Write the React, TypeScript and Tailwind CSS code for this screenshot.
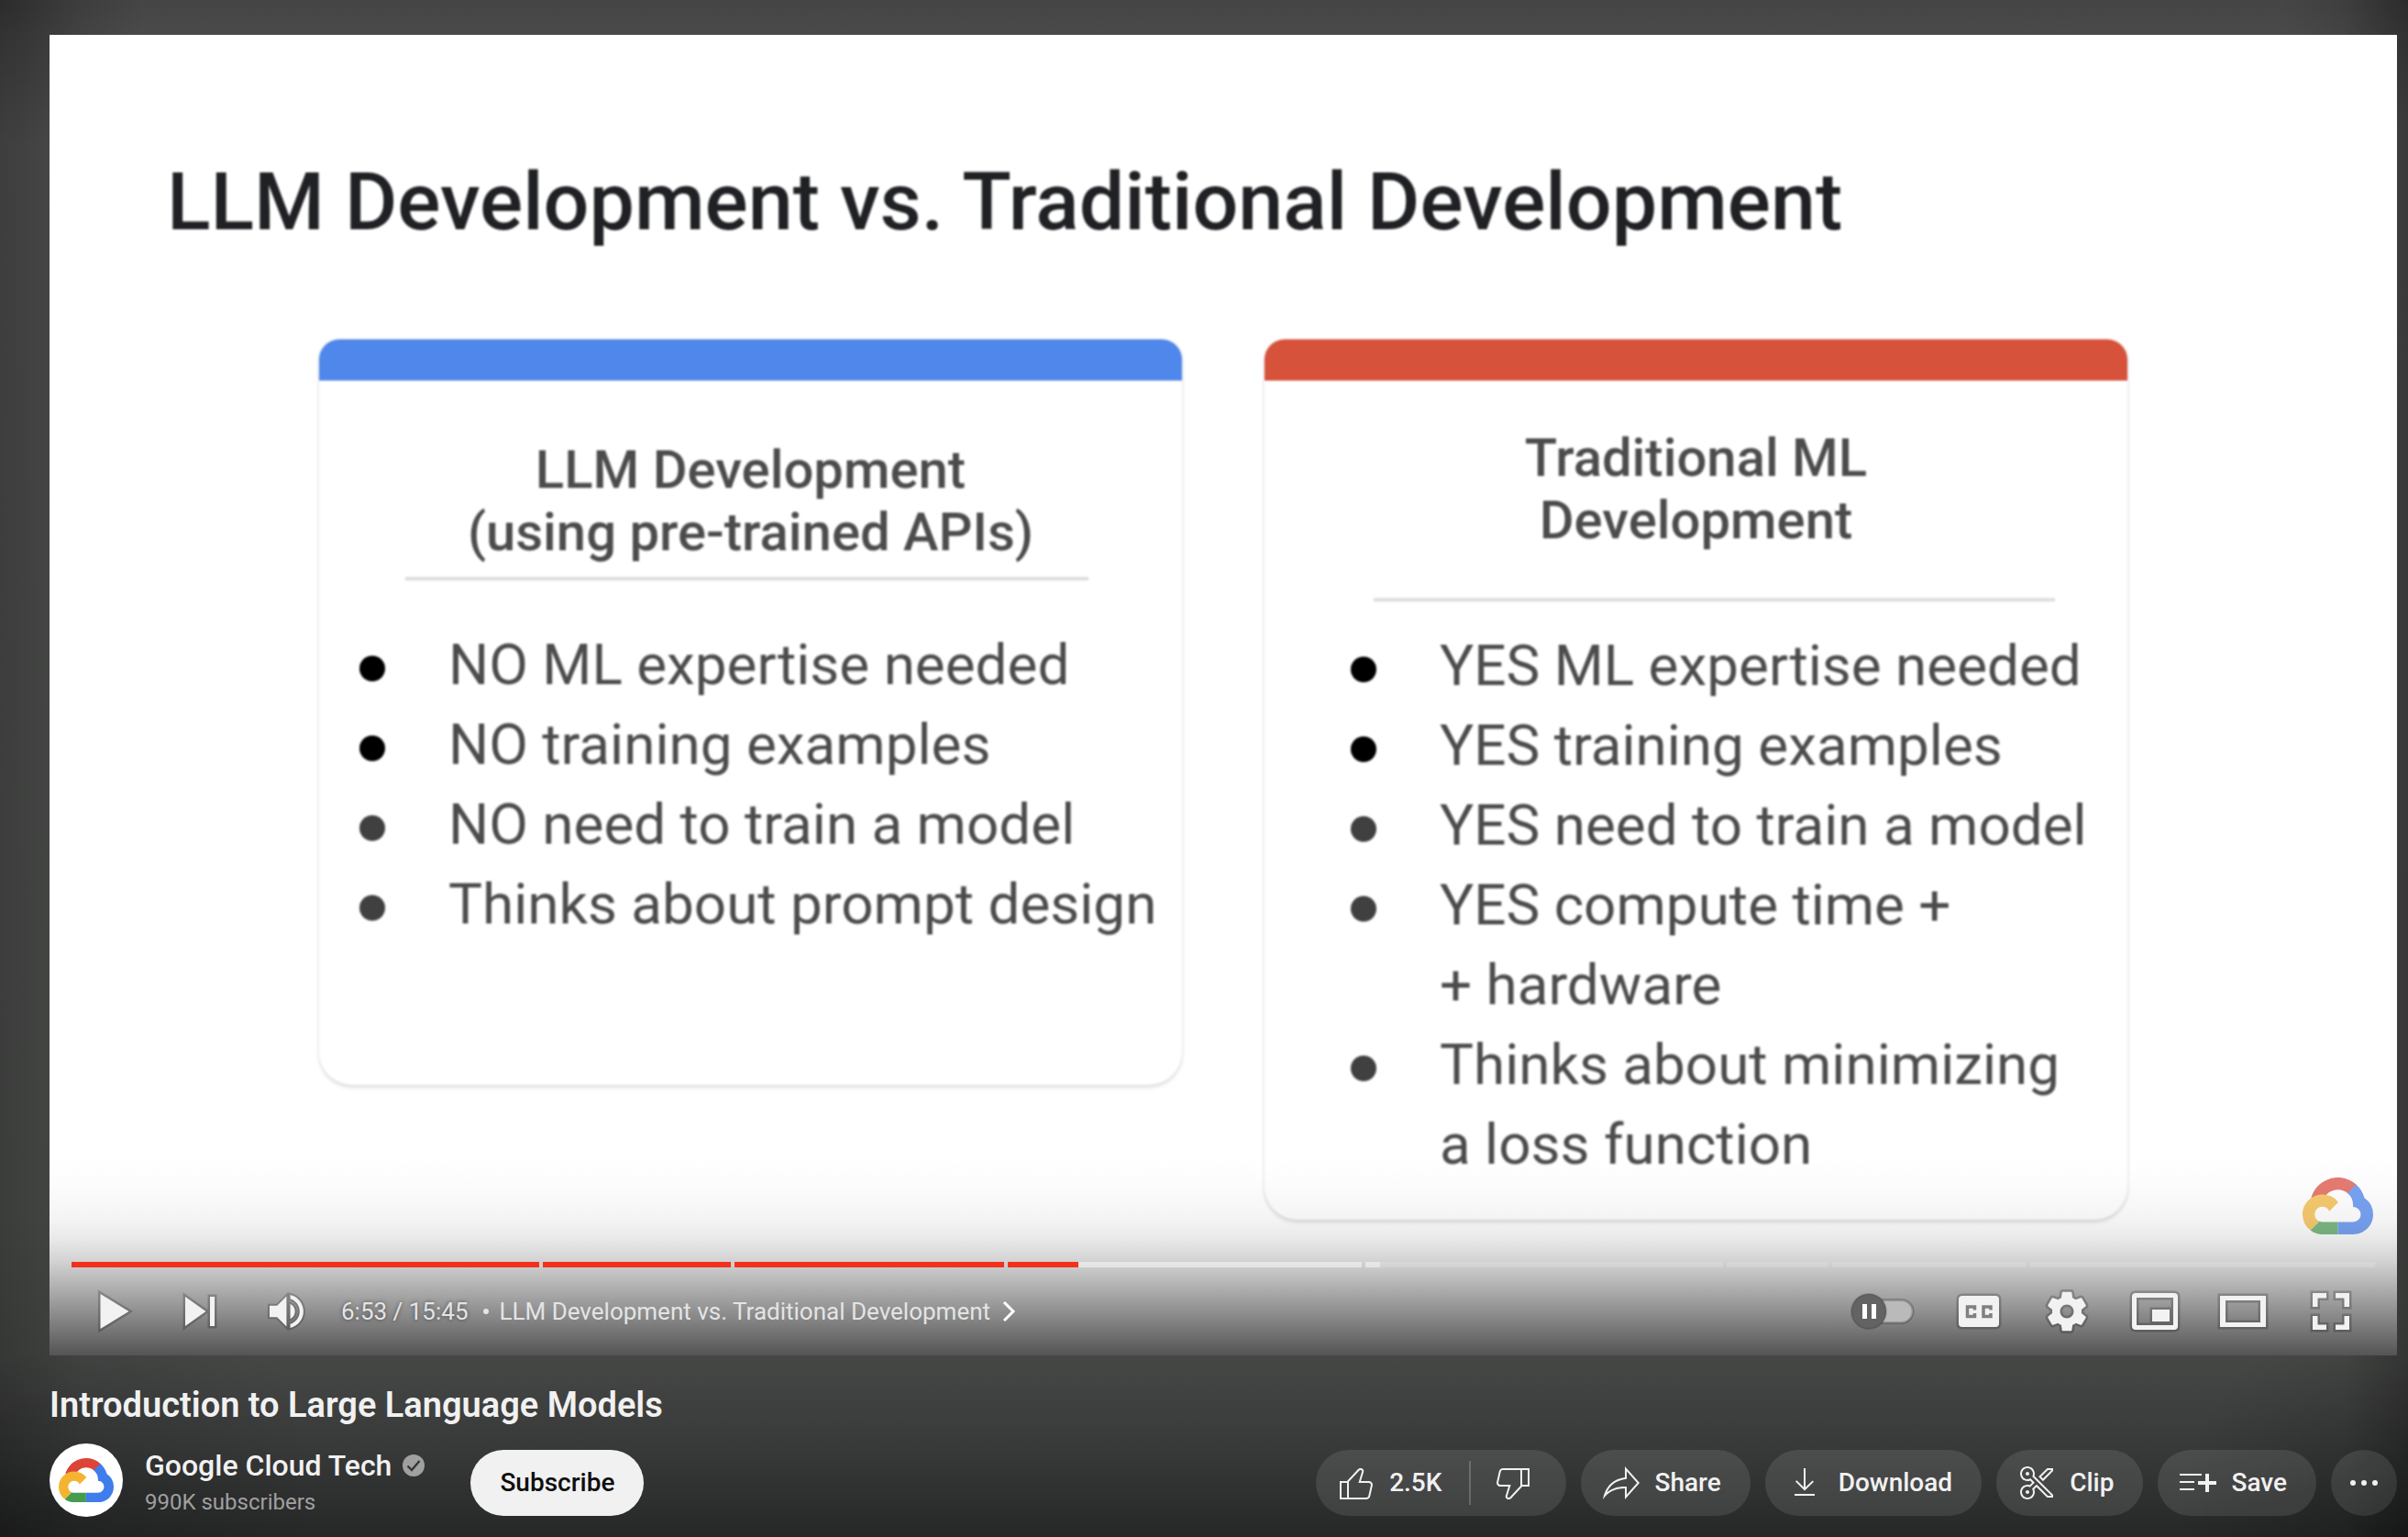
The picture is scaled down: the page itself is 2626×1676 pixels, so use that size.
import type { ReactNode } from "react";

const chapters = [
  { size: 510, played: 100, loaded: 100 },
  { size: 204, played: 100, loaded: 100 },
  { size: 294, played: 100, loaded: 100 },
  { size: 386, played: 20, loaded: 100 },
  { size: 390, played: 0, loaded: 4 },
  { size: 110, played: 0, loaded: 0 },
  { size: 212, played: 0, loaded: 0 },
  { size: 376, played: 0, loaded: 0 },
];

function CloudLogo({ className }: { className: string }) {
  return (
    <svg viewBox="0 0 256 206" className={className} aria-hidden="true">
      <path
        fill="#DB4437"
        d="M170.252 56.819l22.253-22.253 1.483-9.37C153.437-11.677 88.976-7.496 52.42 33.92 42.267 45.423 34.734 59.764 30.717 74.573l7.97-1.123 44.505-7.34 3.436-3.513c19.797-21.742 53.27-24.667 76.128-6.168l7.496.39z"
      />
      <path
        fill="#3F7DED"
        d="M224.205 73.918a100.249 100.249 0 0 0-30.217-48.722l-31.232 31.232a55.515 55.515 0 0 1 20.379 44.037v5.544c15.35 0 27.797 12.445 27.797 27.796 0 15.352-12.446 27.485-27.797 27.485h-55.671v44.505h55.67c39.93.311 72.553-31.494 72.864-71.424a72.303 72.303 0 0 0-31.793-60.453"
      />
      <path
        fill="#459C50"
        d="M71.87 205.796h55.593V161.29H71.87a27.275 27.275 0 0 1-11.4-2.498L28.222 191.04c12.567 9.489 27.9 14.825 43.647 14.757"
      />
      <path
        fill="#F4B432"
        d="M71.87 61.425C31.94 61.663-.237 94.228.001 134.158a72.301 72.301 0 0 0 28.222 56.88l32.248-32.246c-13.99-6.322-20.208-22.786-13.887-36.776 6.322-13.99 22.786-20.208 36.775-13.888a27.796 27.796 0 0 1 13.887 13.888l32.248-32.248A72.224 72.224 0 0 0 71.87 61.425"
      />
    </svg>
  );
}

type CardProps = {
  title: [string, string];
  bar: string;
  head: string;
  rule: string;
  list: string;
  items: { dot: string; lines: string[] }[];
};

function SlideCard({ title, bar, head, rule, list, items }: CardProps) {
  return (
    <section className="overflow-hidden rounded-t-[22px] rounded-b-[36px] bg-white text-[#4c4c4c] shadow-[0_3px_4px_rgba(0,0,0,0.12),0_0_4px_rgba(0,0,0,0.06)]">
      <div className={`h-[45px] ${bar}`} />
      <h3 className={`text-center text-[58px] leading-[68px] font-medium ${head}`}>
        {title[0]}
        <br />
        {title[1]}
      </h3>
      <div className={`h-1 bg-[#dedede] ${rule}`} />
      <ul className={`text-[62px] leading-[87px] ${list}`}>
        {items.map((item) => (
          <li key={item.lines[0]} className="flex gap-[69px]">
            <span className={`mt-[34px] size-7 shrink-0 rounded-full ${item.dot}`} />
            <span className="whitespace-nowrap">
              {item.lines.map((line) => (
                <span key={line} className="block">
                  {line}
                </span>
              ))}
            </span>
          </li>
        ))}
      </ul>
    </section>
  );
}

function Slide() {
  return (
    <div className="h-full bg-white pt-[130px] blur-[1px]">
      <h2 className="pl-[128px] text-[88px] leading-[104px] font-medium text-[#202124]">
        LLM Development vs. Traditional Development
      </h2>
      <div className="mt-[98px] grid grid-cols-2 items-start gap-[90px] px-[294px]">
        <SlideCard
          title={["LLM Development", "(using pre-trained APIs)"]}
          bar="bg-[#5087ea]"
          head="mt-[63px]"
          rule="mt-[15px] mr-[102px] ml-[94px]"
          list="mt-[48px] pb-[154px] pl-11"
          items={[
            { dot: "bg-black", lines: ["NO ML expertise needed"] },
            { dot: "bg-black", lines: ["NO training examples"] },
            { dot: "bg-[#404040]", lines: ["NO need to train a model"] },
            { dot: "bg-[#404040]", lines: ["Thinks about prompt design"] },
          ]}
        />
        <SlideCard
          title={["Traditional ML", "Development"]}
          bar="bg-[#d7523b]"
          head="mt-[50px]"
          rule="mt-[51px] mr-[79px] ml-[119px]"
          list="mt-[26px] pb-[39px] pl-[94px]"
          items={[
            { dot: "bg-black", lines: ["YES ML expertise needed"] },
            { dot: "bg-black", lines: ["YES training examples"] },
            { dot: "bg-[#404040]", lines: ["YES need to train a model"] },
            { dot: "bg-[#404040]", lines: ["YES compute time +", "+ hardware"] },
            { dot: "bg-[#404040]", lines: ["Thinks about minimizing", "a loss function"] },
          ]}
        />
      </div>
    </div>
  );
}

function Glyph({ d, transform }: { d: string; transform?: string }) {
  return (
    <g transform={transform} fillRule="evenodd">
      <path d={d} fill="none" stroke="#000" strokeOpacity="0.2" strokeWidth={transform ? 2 : 5} />
      <path d={d} fill="#f2f2f2" />
    </g>
  );
}

function PlayerButton({ label, box, className, children }: { label: string; box: string; className: string; children: ReactNode }) {
  return (
    <button type="button" aria-label={label} className={`h-24 shrink-0 ${className}`}>
      <svg viewBox={box} className="size-full" aria-hidden="true">
        {children}
      </svg>
    </button>
  );
}

const VOLUME =
  "M8,21 L12,21 L17,26 L17,10 L12,15 L8,15 Z M19,14 L19,22 C20.48,21.32 21.5,19.77 21.5,18 C21.5,16.26 20.48,14.74 19,14 Z M19,11.29 C21.89,12.15 24,14.83 24,18 C24,21.17 21.89,23.85 19,24.71 L19,26.77 C23.01,25.86 26,22.28 26,18 C26,13.72 23.01,10.14 19,9.23 Z";
const GEAR =
  "m 23.94,18.78 c .03,-0.25 .05,-0.51 .05,-0.78 0,-0.27 -0.02,-0.52 -0.05,-0.78 l 1.68,-1.32 c .15,-0.12 .19,-0.33 .09,-0.51 l -1.6,-2.76 c -0.09,-0.17 -0.31,-0.24 -0.48,-0.17 l -1.99,.8 c -0.41,-0.32 -0.86,-0.58 -1.35,-0.78 l -0.30,-2.12 c -0.02,-0.19 -0.19,-0.33 -0.39,-0.33 l -3.2,0 c -0.2,0 -0.36,.14 -0.39,.33 l -0.30,2.12 c -0.48,.2 -0.93,.47 -1.35,.78 l -1.99,-0.8 c -0.18,-0.07 -0.39,0 -0.48,.17 l -1.6,2.76 c -0.10,.17 -0.05,.39 .09,.51 l 1.68,1.32 c -0.03,.25 -0.05,.52 -0.05,.78 0,.26 .02,.52 .05,.78 l -1.68,1.32 c -0.15,.12 -0.19,.33 -0.09,.51 l 1.6,2.76 c .09,.17 .31,.24 .48,.17 l 1.99,-0.8 c .41,.32 .86,.58 1.35,.78 l .30,2.12 c .02,.19 .19,.33 .39,.33 l 3.2,0 c .2,0 .36,-0.14 .39,-0.33 l .30,-2.12 c .48,-0.2 .93,-0.47 1.35,-0.78 l 1.99,.8 c .18,.07 .39,0 .48,-0.17 l 1.6,-2.76 c .09,-0.17 .05,-0.39 -0.09,-0.51 l -1.68,-1.32 z m -5.94,2.01 c -1.54,0 -2.8,-1.25 -2.8,-2.8 0,-1.54 1.25,-2.8 2.8,-2.8 1.54,0 2.8,1.25 2.8,2.8 0,1.54 -1.25,2.8 -2.8,2.8 z";

function Player() {
  return (
    <div className="relative aspect-video w-full overflow-hidden bg-white">
      <Slide />
      <CloudLogo className="absolute right-[26px] bottom-[132px] w-[77px] opacity-70" />
      <div className="absolute inset-x-0 bottom-0 h-[216px] bg-[linear-gradient(to_bottom,rgba(0,0,0,0)_0%,rgba(0,0,0,0.01)_14%,rgba(0,0,0,0.045)_31%,rgba(0,0,0,0.085)_41%,rgba(0,0,0,0.18)_53%,rgba(0,0,0,0.295)_64%,rgba(0,0,0,0.44)_78%,rgba(0,0,0,0.67)_100%)]" />
      <div className="absolute inset-x-6 bottom-0">
        <div className="flex h-[6px] gap-1" role="progressbar" aria-label="Video progress" aria-valuenow={44}>
          {chapters.map((c, i) => (
            <div key={i} className="relative basis-0 bg-white/15" style={{ flexGrow: c.size }}>
              <div className="absolute inset-y-0 left-0 bg-white/40" style={{ width: `${c.loaded}%` }} />
              <div className="absolute inset-y-0 left-0 bg-[#f3301c]" style={{ width: `${c.played}%` }} />
            </div>
          ))}
        </div>
        <div className="flex items-center text-[26px] leading-none text-[#e4e4e4]">
          <PlayerButton label="Play" box="0 0 92 96" className="w-[92px]">
            <Glyph d="M31.5,29 L62.5,48 L31.5,67 Z" />
          </PlayerButton>
          <PlayerButton label="Next" box="0 0 92 96" className="w-[92px]">
            <Glyph d="M32,32 L54.5,48 L32,64 Z M59,32 H64 V64 H59 Z" />
          </PlayerButton>
          <PlayerButton label="Mute" box="0 0 92 96" className="w-[92px]">
            <Glyph d={VOLUME} transform="translate(15.6 11.1) scale(2.05)" />
          </PlayerButton>
          <span className="ml-[18px] [text-shadow:0_0_4px_rgba(0,0,0,0.5)]">6:53 / 15:45</span>
          <button type="button" className="ml-4 flex items-center gap-3 whitespace-nowrap">
            <span className="size-[6px] rounded-full bg-[#e4e4e4]" />
            LLM Development vs. Traditional Development
            <svg viewBox="0 0 16 24" className="h-6 w-4 text-white" fill="none" stroke="currentColor" strokeWidth="3" aria-hidden="true">
              <path d="M3 2 L13 12 L3 22" />
            </svg>
          </button>
          <div className="ml-auto flex">
            <PlayerButton label="Autoplay" box="0 0 96 96" className="w-24">
              <rect x="20" y="35.5" width="52" height="25" rx="12.5" fill="#bababa" stroke="#000" strokeOpacity="0.2" strokeWidth="3" />
              <circle cx="24" cy="48" r="19" fill="#636363" stroke="#000" strokeOpacity="0.15" strokeWidth="2" />
              <path d="M17 40h5v16h-5z M27 40h5v16h-5z" fill="#fff" />
            </PlayerButton>
            <PlayerButton label="Subtitles" box="0 0 96 96" className="w-24">
              <Glyph d="M30,31 H66 Q70,31 70,35 V61 Q70,65 66,65 H30 Q26,65 26,61 V35 Q26,31 30,31 Z" />
              <path d="M43.5,46.5 V43 H35.5 V53.5 H43.5 V50 M61,46.5 V43 H53 V53.5 H61 V50" fill="none" stroke="#808080" strokeWidth="3.5" />
            </PlayerButton>
            <PlayerButton label="Settings" box="0 0 96 96" className="w-24">
              <Glyph d={GEAR} transform="scale(2.667)" />
            </PlayerButton>
            <PlayerButton label="Miniplayer" box="0 0 96 96" className="w-24">
              <Glyph d="M27,28 H69 Q73,28 73,32 V64 Q73,68 69,68 H27 Q23,68 23,64 V32 Q23,28 27,28 Z M28,33 V63 H68 V33 Z M45,46 H64 V59 H45 Z" />
            </PlayerButton>
            <PlayerButton label="Theater mode" box="0 0 96 96" className="w-24">
              <Glyph d="M23,31 H73 V65 H23 Z M29,36 V60 H67 V36 Z" />
            </PlayerButton>
            <PlayerButton label="Full screen" box="0 0 96 96" className="w-24">
              <Glyph d="M28,28 H43 V33.5 H33.5 V43 H28 Z M53,28 H68 V43 H62.5 V33.5 H53 Z M28,53 H33.5 V62.5 H43 V68 H28 Z M62.5,53 H68 V68 H53 V62.5 H62.5 Z" />
            </PlayerButton>
          </div>
        </div>
      </div>
    </div>
  );
}

function Icon({ d }: { d: string }) {
  return (
    <svg viewBox="0 0 24 24" className="size-12 shrink-0" fill="currentColor" fillRule="evenodd" aria-hidden="true">
      <path d={d} />
    </svg>
  );
}

const LIKE =
  "M18.77,11h-4.23l1.52-4.94C16.38,5.03,15.54,4,14.38,4c-0.58,0-1.14,0.24-1.52,0.65L7,11H3v10h4h1h9.43c1.06,0,1.98-0.67,2.19-1.61l1.34-6C21.23,12.15,20.18,11,18.77,11z M7,20H4v-8h3V20z M19.98,13.17l-1.34,6C18.54,19.65,18.03,20,17.43,20H8v-8.61l5.6-6.06C13.79,5.12,14.08,5,14.38,5c0.26,0,0.5,0.11,0.63,0.3c0.07,0.1,0.15,0.26,0.09,0.47l-1.52,4.94L13.18,12h1.35h4.23c0.41,0,0.8,0.17,1.03,0.46C19.92,12.61,20.05,12.86,19.98,13.17z";
const DISLIKE =
  "M17,4h-1H6.57C5.5,4,4.59,4.67,4.38,5.61l-1.34,6C2.77,12.85,3.82,14,5.23,14h4.23l-1.52,4.94C7.62,19.97,8.46,21,9.62,21c0.58,0,1.14-0.24,1.52-0.65L17,14h4V4H17z M10.4,19.67C10.21,19.88,9.92,20,9.62,20c-0.26,0-0.5-0.11-0.63-0.3c-0.07-0.1-0.15-0.26-0.09-0.47l1.52-4.94l0.4-1.29H9.46H5.23c-0.41,0-0.8-0.17-1.03-0.46c-0.12-0.15-0.25-0.4-0.18-0.72l1.34-6C5.46,5.35,5.97,5,6.57,5H16v8.61L10.4,19.67z M20,13h-3V5h3V13z";

const actions = [
  {
    label: "Share",
    d: "M15,5.63L20.66,12L15,18.37V15v-1h-1c-3.96,0-7.14,1-9.75,3.09c1.84-4.07,5.11-6.4,9.89-7.1L15,9.86V9V5.63 M14,3v6C6.22,10.13,3.11,15.33,2,21c2.78-3.97,6.44-6,12-6v6l8-9L14,3L14,3z",
  },
  {
    label: "Download",
    d: "M17 18v1H6v-1h11zm-.5-6.6-.7-.7-3.8 3.7V4h-1v10.4l-3.8-3.8-.7.7 5 5 5-4.9z",
  },
  {
    label: "Clip",
    d: "M8 7c0 .55-.45 1-1 1s-1-.45-1-1 .45-1 1-1 1 .45 1 1zm-1 9c-.55 0-1 .45-1 1s.45 1 1 1 1-.45 1-1-.45-1-1-1zm3.79-7.77L21 18.44V20h-3.27l-5.76-5.76-1.27 1.27c.19.46.3.96.3 1.49 0 2.21-1.79 4-4 4s-4-1.79-4-4 1.79-4 4-4c.42 0 .81.08 1.19.2l1.37-1.37-1.11-1.11C8 10.89 7.51 11 7 11c-2.21 0-4-1.79-4-4s1.79-4 4-4 4 1.79 4 4c0 .43-.09.84-.21 1.23zM10.08 8.94l-.43-.43.19-.58C9.95 7.58 10 7.28 10 7c0-1.65-1.35-3-3-3S4 5.35 4 7s1.35 3 3 3c.36 0 .73-.07 1.09-.21l.61-.24.46.46 1.11 1.11.71.71-.71.71-1.37 1.37-.43.43-.58-.18C7.55 14.05 7.27 14 7 14c-1.65 0-3 1.35-3 3s1.35 3 3 3 3-1.35 3-3c0-.38-.07-.75-.22-1.12l-.25-.61.46-.46 1.27-1.27.71-.71.71.71L18.15 19H20v-.15l-9.92-9.91zM17.73 4H21v1.56l-5.52 5.52-2.41-2.41L17.73 4zm.42 1-3.67 3.67 1 1L20 5.15V5h-1.85z",
  },
  {
    label: "Save",
    d: "M22 13h-4v4h-2v-4h-4v-2h4V7h2v4h4v2zm-8-6H2v1h12V7zM2 12h8v-1H2v1zm0 4h8v-1H2v1z",
  },
];

export default function App() {
  return (
    <main className="min-h-screen overflow-hidden bg-[radial-gradient(circle_at_0_0,rgba(0,0,0,0.25),transparent_160px),radial-gradient(circle_at_100%_0,rgba(0,0,0,0.2),transparent_140px),radial-gradient(circle_at_0_100%,rgba(0,0,0,0.2),transparent_360px),radial-gradient(circle_at_100%_100%,rgba(0,0,0,0.25),transparent_260px),linear-gradient(to_right,rgba(0,0,0,0.16),transparent_90px),linear-gradient(to_left,rgba(0,0,0,0.22),transparent_70px),linear-gradient(to_bottom,#444544,#494a49_38px,#464846_calc(100%-198px),#383939_calc(100%-98px),#262727_100%)] pt-[38px] pr-3 pl-[54px] font-['Roboto',sans-serif] text-[#f1f1f1]">
      <Player />
      <h1 className="mt-[26px] text-[38px] leading-[56px] font-semibold">Introduction to Large Language Models</h1>
      <div className="mt-[14px] flex items-start text-[28px] font-medium whitespace-nowrap">
        <div className="flex size-20 items-center justify-center rounded-full bg-white">
          <CloudLogo className="w-[60px]" />
        </div>
        <div className="ml-6 pt-[2px]">
          <div className="flex items-center gap-3">
            <a href="#channel" className="text-[32px] leading-[44px]">
              Google Cloud Tech
            </a>
            <svg viewBox="0 0 24 24" className="size-6" aria-label="Verified" role="img">
              <circle cx="12" cy="12" r="12" fill="#a0a0a0" />
              <path d="M5.5 12.5 L10 17 L18.5 7" fill="none" stroke="#373737" strokeWidth="2.4" />
            </svg>
          </div>
          <p className="text-2xl leading-9 font-normal text-[#a0a0a0]">990K subscribers</p>
        </div>
        <button type="button" className="mt-[7px] ml-[50px] h-[72px] rounded-full bg-[#f1f1f1] px-8 text-[#0f0f0f]">
          Subscribe
        </button>
        <div className="mt-[7px] ml-auto flex gap-4">
          <div className="flex h-[72px] items-center rounded-full bg-white/10">
            <button type="button" className="flex h-full items-center gap-3 pr-[30px] pl-5">
              <Icon d={LIKE} />
              2.5K
            </button>
            <div className="h-12 w-[2px] bg-white/20" />
            <button type="button" aria-label="Dislike" className="flex h-full items-center pr-[34px] pl-[22px]">
              <Icon d={DISLIKE} />
            </button>
          </div>
          {actions.map((a) => (
            <button key={a.label} type="button" className="flex h-[72px] items-center gap-3 rounded-full bg-white/10 pr-8 pl-5">
              <Icon d={a.d} />
              {a.label}
            </button>
          ))}
          <button type="button" aria-label="More actions" className="flex size-[72px] items-center justify-center rounded-full bg-white/10">
            <Icon d="M4.5 12a1.5 1.5 0 1 0 3 0a1.5 1.5 0 1 0 -3 0z M10.5 12a1.5 1.5 0 1 0 3 0a1.5 1.5 0 1 0 -3 0z M16.5 12a1.5 1.5 0 1 0 3 0a1.5 1.5 0 1 0 -3 0z" />
          </button>
        </div>
      </div>
    </main>
  );
}
